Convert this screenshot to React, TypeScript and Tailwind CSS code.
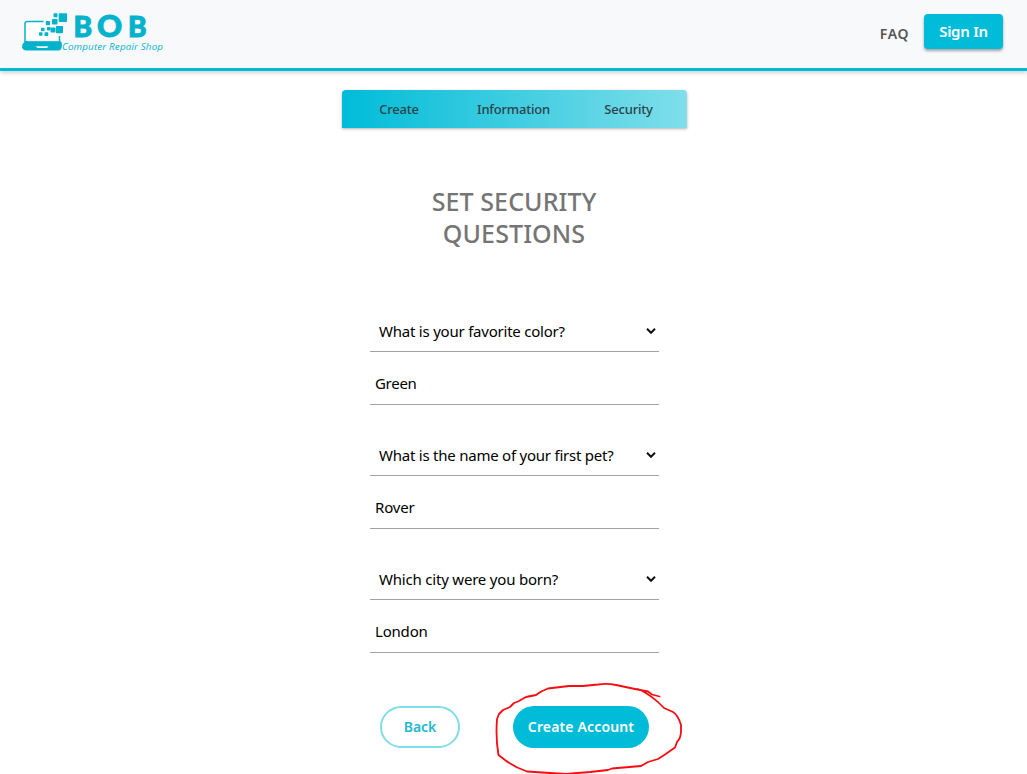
import React from "react";

const QUESTIONS = [
  { question: "What is your favorite color?", answer: "Green", q: "tracking-[-0.22px]", a: "tracking-[-0.3px]" },
  { question: "What is the name of your first pet?", answer: "Rover", q: "tracking-[-0.23px]", a: "tracking-[-0.2px]" },
  { question: "Which city were you born?", answer: "London", q: "tracking-[-0.2px]", a: "tracking-[-0.2px]" },
];

function Logo() {
  return (
    <div className="flex h-[42px] w-[146px]">
      <svg className="-mr-px h-[40px] w-[46px] shrink-0" viewBox="0 0 46 40" fill="#04b2cb">
        <path d="M21.500 9.500H5.500Q3 9.500 3 11.500V30H37.500V24" fill="#fff" stroke="#04b2cb" strokeWidth="1.5" />
        <path d="M2 30.500Q4 27.500 6 29.800H36L37.500 29Q40.500 29.500 39.800 34Q39.500 38.500 36.500 38.500H4Q.2 38 0 34.500Q.5 31 2 30.500Z" />
        <path d="M13.500 34.300H26.500L25 36H15.500Z" fill="#f8f9fa" />
        <rect x="36.700" y="1.300" width="8.300" height="8.700" rx=".7" />
        <rect x="31.500" y="1.300" width="4" height="4" rx=".7" />
        <rect x="30" y="7" width="5.500" height="5.500" rx=".7" />
        <rect x="23.800" y="9" width="4.200" height="4.200" rx=".7" />
        <rect x="34" y="14" width="7" height="7.300" rx=".7" />
        <rect x="28.500" y="15.500" width="5" height="5" rx=".7" />
        <rect x="25" y="15" width="3.500" height="3.500" rx=".7" />
        <rect x="19" y="15.800" width="3.500" height="3.500" rx=".7" />
        <rect x="22.500" y="20.300" width="3.800" height="3.800" rx=".7" />
        <rect x="17" y="20.300" width="3.500" height="3.500" rx=".7" />
      </svg>
      <svg className="h-[42px] w-[104px] shrink-0 overflow-visible" viewBox="0 0 104 42" fill="#04b2cb">
        <text y="24.800" fontFamily="Lato" fontWeight="900" fontSize="28" stroke="#04b2cb" strokeWidth="1">
          <tspan x="6.500">B</tspan>
          <tspan x="30" y="24.800" fontSize="31">O</tspan>
          <tspan x="61" y="24.800">B</tspan>
        </text>
        <text x="-5" y="38" fontFamily="Open Sans" fontStyle="italic" fontSize="9.800" textLength="101" lengthAdjust="spacing">Computer Repair Shop</text>
      </svg>
    </div>
  );
}

export default function App() {
  return (
    <div className="relative h-[774px] w-full overflow-hidden bg-white font-['Noto_Sans',sans-serif]">
      <header className="flex h-[71px] items-start justify-between border-b-[3px] border-[#00bcd8] bg-[#f8f9fb] pr-6 pl-[22px] shadow-[0_2px_4px_rgba(0,0,0,0.18)]">
        <div className="pt-3"><Logo /></div>
        <nav className="flex items-center pt-[14px]">
          <a className="mr-[15px] pt-1 text-[14px] font-semibold tracking-[0.6px] text-[#555]">FAQ</a>
          <button className="h-[35px] w-[79px] rounded-[4px] bg-[#00bcd8] text-[15px] font-semibold tracking-[-0.25px] text-white shadow-[0_2px_3px_rgba(0,0,0,0.35)]">Sign In</button>
        </nav>
      </header>
      <main className="ml-[342px] w-[346px] pt-[19px]">
        <ol className="flex h-[38px] w-[345px] items-center rounded-t-[4px] bg-linear-to-r/srgb from-[#00bcd8] to-[#80deea] pt-px text-[13px] tracking-[-0.2px] text-[#2d4248] shadow-[0_1px_3px_rgba(0,0,0,0.3)]">
          <li className="w-[114px] text-center font-medium">Create</li>
          <li className="w-[115px] text-center font-medium">Information</li>
          <li className="w-[115px] text-center font-medium">Security</li>
        </ol>
        <h1 className="mt-[57px] mb-[62px] -translate-x-px text-center text-[25px] leading-8 font-medium tracking-[0.1px] text-[#757575]">
          SET SECURITY
          <br />
          QUESTIONS
        </h1>
        <form className="ml-[28px] w-[289px] text-[15px] text-black">
          {QUESTIONS.map((item) => (
            <div key={item.question} className="h-[124px]">
              <div className="flex h-[41px] items-center justify-between border-b border-[#a3a3a3] pr-[3px] pl-[9px]">
                <span className={item.q}>{item.question}</span>
                <svg className="h-[6px] w-[10px]" viewBox="0 0 10 6" fill="none" stroke="#111" strokeWidth="2"><path d="m1 .8 4 4 4-4" /></svg>
              </div>
              <div className="flex h-[53px] items-center border-b border-[#a3a3a3] pt-[11px] pl-[5px]">
                <span className={item.a}>{item.answer}</span>
              </div>
            </div>
          ))}
          <div className="mt-[23px] flex justify-between pr-[10px] pl-[10px]">
            <button type="button" className="h-[42px] w-[80px] rounded-full border-2 border-[#80deea] pb-[2px] text-[14px] font-semibold text-[#22b8cf]">Back</button>
            <button type="button" className="h-[42px] w-[136px] rounded-full bg-[#00bcd8] pb-[2px] text-[14px] font-semibold tracking-[0.15px] whitespace-nowrap text-white">Create Account</button>
          </div>
        </form>
      </main>
      <svg className="pointer-events-none absolute top-[670px] left-[480px] h-[104px] w-[220px]" viewBox="480 670 220 104" fill="none" stroke="#fa0b10" strokeWidth="1.8" strokeLinecap="round" strokeLinejoin="round">
        <path d="M659.500 696.500 652 694.500 648 691.500 635 689 616 685Q607 683 598 684.500L583 686H569L548 688.500Q541 691 536 695L526 697 518 701.500 514 703 510 707 503 710 499 714 497 719Q495.500 738 498.500 755L505 760Q514 767 527 771.500L550 773 566 774 590 772 608 770 612 768.500 641 766 648 762 658 759 665 754.500 675 747.500 677 742Q681 738 681 731V725Q678 715 673 712L664 708Q652 695 638 689" />
      </svg>
    </div>
  );
}
